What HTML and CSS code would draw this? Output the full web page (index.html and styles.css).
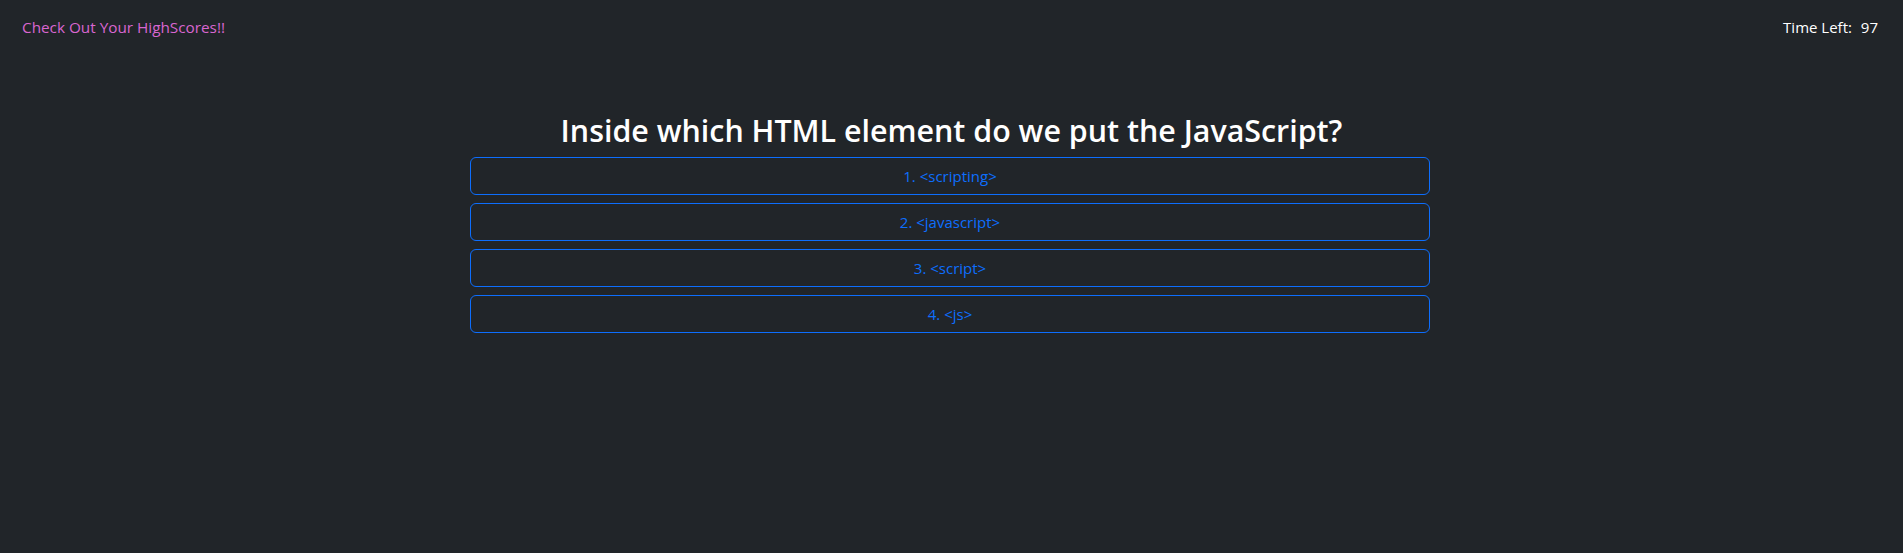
FILE: index.html
```html
<!DOCTYPE html>
<html lang="en">
<head>
<meta charset="utf-8">
<title>Code Quiz</title>
<link rel="stylesheet" href="styles.css">
</head>
<body>
<header class="topbar">
  <a class="highscores" href="#">Check Out Your HighScores!!</a>
  <div class="timer">Time Left: <span class="time">97</span></div>
</header>
<main class="quiz">
  <h2 class="question">Inside which HTML element do we put the JavaScript?</h2>
  <div class="choices">
    <button class="choice">1. &lt;scripting&gt;</button>
    <button class="choice">2. &lt;javascript&gt;</button>
    <button class="choice">3. &lt;script&gt;</button>
    <button class="choice">4. &lt;js&gt;</button>
  </div>
</main>
</body>
</html>
```
FILE: styles.css
```css
* { box-sizing: border-box; }
html, body {
  margin: 0;
  background: #212529;
  color: #ffffff;
  font-family: "Open Sans", "Noto Sans", sans-serif;
  font-size: 15px;
  line-height: 1.5;
}
.topbar {
  display: flex;
  justify-content: space-between;
  align-items: center;
  padding: 16px 25px 0 22px;
}
.highscores {
  color: #d966d0;
  text-decoration: none;
  font-size: 15.3px;
}
.timer .time { margin-left: 5px; }
.quiz {
  display: flex;
  flex-direction: column;
  align-items: center;
  margin-top: 74px;
}
.question {
  margin: 0 0 4px;
  font-size: 30.4px;
  font-weight: 600;
  line-height: 1.2;
  height: 40px;
}
.choices {
  display: flex;
  flex-direction: column;
  gap: 8px;
  width: 960px;
  margin-left: -3px;
}
.choice {
  height: 38px;
  background: transparent;
  border: 1px solid #0d6efd;
  border-radius: 6px;
  color: #0d6efd;
  font-family: inherit;
  font-size: 15px;
  padding: 6px 12px;
}
```
